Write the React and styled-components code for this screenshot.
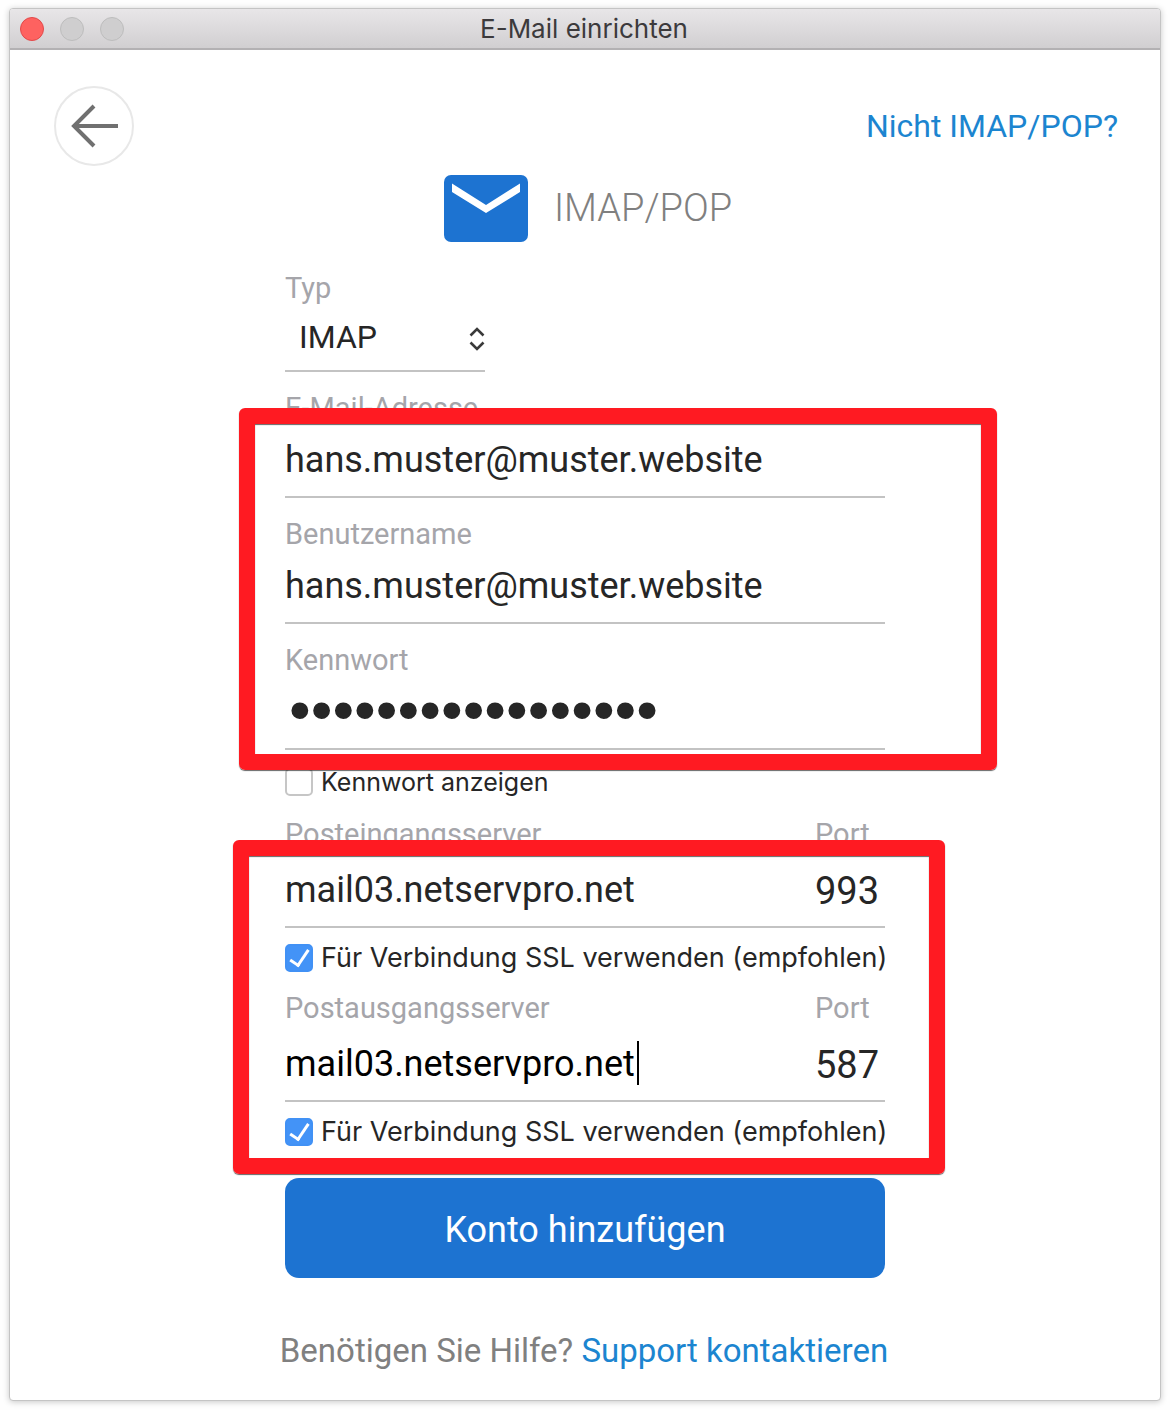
import React, { Component } from 'react';
import styled, { createGlobalStyle, css } from 'styled-components';

const GlobalStyle = createGlobalStyle`
  * {
    box-sizing: border-box;
  }
  body {
    margin: 0;
    background: #fefefe;
    color: #262626;
    font-family: Roboto, "Liberation Sans", sans-serif;
  }
  button, input, select {
    font-family: inherit;
    color: inherit;
  }
`;

const Window = styled.div`
  margin: 8px 9px 9px;
  background: #fff;
  border: 1px solid #c4c4c4;
  border-radius: 4px;
  box-shadow: 0 1px 6px rgba(0, 0, 0, 0.22);
`;

const TitleBar = styled.header`
  display: grid;
  grid-template-columns: 1fr auto 1fr;
  align-items: center;
  height: 41px;
  padding: 0 12px 0 10px;
  border-bottom: 2px solid #b3b1b3;
  border-radius: 3px 3px 0 0;
  background: linear-gradient(#e8e6e8, #d1cfd1);
`;

const Lights = styled.div`
  display: flex;
  gap: 16px;
`;

const Light = styled.button`
  width: 24px;
  height: 24px;
  padding: 0;
  border: 1px solid ${props => props.$close ? '#e2494a' : '#bdbdbd'};
  border-radius: 50%;
  background: ${props => props.$close ? '#fe6260' : '#cfcecf'};
`;

const Title = styled.h1`
  margin: 0;
  font-family: Inter, sans-serif;
  font-size: 26px;
  font-weight: 400;
  line-height: 36px;
  color: #3c3a3c;
`;

const TopNav = styled.nav`
  display: flex;
  align-items: center;
  justify-content: space-between;
  padding: 36px 42px 0 44px;
`;

const BackButton = styled.button`
  display: flex;
  align-items: center;
  justify-content: center;
  width: 80px;
  height: 80px;
  padding: 0;
  border: 2px solid #e8e8e8;
  border-radius: 50%;
  background: #fff;
`;

const Link = styled.a`
  font-size: ${props => props.$inline ? '33px' : '32px'};
  line-height: 40px;
  color: #1c85d0;
  text-decoration: none;
`;

const Form = styled.form`
  display: flex;
  flex-direction: column;
  max-width: 600px;
  margin: 0 auto;
`;

const Heading = styled.h2`
  display: flex;
  align-items: center;
  justify-content: center;
  gap: 26px;
  height: 68px;
  margin: 8px 0 10px;
  padding-left: 6px;
  font-size: 38px;
  font-weight: 300;
  color: #808080;
`;

const Group = styled.fieldset`
  position: relative;
  min-width: 0;
  margin: 0;
  padding: 0;
  border: 0;
`;

// red frame laid over a group of fields
const Marker = styled.span`
  position: absolute;
  inset: ${props => props.$inset};
  border: 16px solid #ff1a22;
  border-radius: 6px;
  box-shadow: 0 1px 1px rgba(0, 0, 0, 0.6), inset 0 1px 1px rgba(0, 0, 0, 0.6);
  pointer-events: none;
`;

const Row = styled.div`
  display: grid;
  grid-template-columns: 1fr 70px;
  border-bottom: 2px solid #c3c3c3;
`;

const FieldBox = styled.div`
  display: flex;
  flex-direction: column;
  padding-top: 18px;
`;

const Label = styled.label`
  font-size: 29px;
  line-height: 36px;
  color: #a5a5aa;
`;

const control = css`
  min-width: 0;
  width: 100%;
  margin: 0;
  padding: 0 0 2px;
  border: 0;
  border-radius: 0;
  outline: 0;
  background: transparent;
  font-size: 36px;
`;

const Input = styled.input`
  ${control}
  height: 72px;
  border-bottom: 2px solid #c3c3c3;
  ${props => props.type === 'password' && css`
    padding: 0 0 8px 4px;
    font-family: "Liberation Sans", sans-serif;
    font-size: 62px;
  `}
`;

const ServerInput = styled.input`
  ${control}
  height: 74px;
  padding: 2px 0 0;
  ${props => props.$active && css`
    width: auto;
    field-sizing: content;
    color: #000;
  `}
  ${props => props.$port && css`
    padding-top: 4px;
    font-size: 38px;
  `}
`;

const ActiveLine = styled.div`
  display: flex;
  align-items: center;
`;

const Caret = styled.span`
  width: 2px;
  height: 44px;
  margin-left: 2px;
  background: #000;
`;

const SelectBox = styled.div`
  position: relative;
  width: 200px;
  svg {
    position: absolute;
    right: 0;
    top: 21px;
    pointer-events: none;
  }
`;

const Select = styled.select`
  ${control}
  appearance: none;
  height: 66px;
  padding-left: 14px;
  border-bottom: 2px solid #c3c3c3;
  font-size: 32px;
`;

const CheckLabel = styled.label`
  display: flex;
  align-items: center;
  gap: 8px;
  height: 28px;
  margin: ${props => props.$small ? '18px 0 2px' : '16px 0 0'};
  font-family: Inter, sans-serif;
  font-size: ${props => props.$small ? '25px' : '27px'};
  line-height: 28px;
  white-space: nowrap;
`;

const Checkbox = styled.input`
  appearance: none;
  display: grid;
  place-items: center;
  flex: none;
  width: 28px;
  height: 28px;
  margin: 0;
  border: 2px solid #c6c6c6;
  border-radius: 5px;
  background: #fff;
  &:checked {
    border-color: #4191f5;
    background: #4393f7;
  }
  &:checked::after {
    content: '';
    width: 8px;
    height: 17px;
    margin-bottom: 4px;
    border: solid #fff;
    border-width: 0 3px 3px 0;
    transform: rotate(34deg);
  }
`;

const SubmitButton = styled.button`
  height: 100px;
  margin-top: 32px;
  padding: 4px 0 0;
  border: 0;
  border-radius: 14px;
  background: #1d73d1;
  color: #fff;
  font-size: 36px;
`;

const Footer = styled.footer`
  padding: 53px 2px 29px 0;
  text-align: center;
  font-size: 33px;
  line-height: 40px;
  color: #808080;
`;

const ArrowIcon = () => (
  <svg width="48" height="44" viewBox="0 0 48 44" fill="none" stroke="#707070" strokeWidth="4">
    <path d="M48 22H4M24 2L4 22l20 20" />
  </svg>
);

const MailIcon = () => (
  <svg width="84" height="67" viewBox="0 0 84 67">
    <rect width="84" height="67" rx="7" fill="#1d73d1" />
    <path d="M8 8.5L42 30 76 8.5V17L42 38 8 17z" fill="#fff" />
  </svg>
);

const SelectArrows = () => (
  <svg width="16" height="24" viewBox="0 0 16 24" fill="none" stroke="#3a3a3a" strokeWidth="2.6">
    <path d="M1.5 8.5L8 2l6.5 6.5M1.5 15.5L8 22l6.5-6.5" />
  </svg>
);

const Field = ({ id, label, ...rest }) => (
  <FieldBox>
    <Label htmlFor={id}>{label}</Label>
    <Input id={id} {...rest} />
  </FieldBox>
);

const ServerFields = ({ id, label, host, port, active, onChange }) => (
  <>
    <Row>
      <FieldBox>
        <Label htmlFor={id}>{label}</Label>
        <ActiveLine>
          <ServerInput id={id} name={id} value={host} onChange={onChange} $active={active} />
          {active && <Caret />}
        </ActiveLine>
      </FieldBox>
      <FieldBox>
        <Label htmlFor={id + 'Port'}>Port</Label>
        <ServerInput id={id + 'Port'} name={id + 'Port'} value={port} onChange={onChange} $port />
      </FieldBox>
    </Row>
    <CheckLabel>
      <Checkbox type="checkbox" defaultChecked />
      Für Verbindung SSL verwenden (empfohlen)
    </CheckLabel>
  </>
);

class App extends Component {
  state = {
    type: 'IMAP',
    email: 'hans.muster@muster.website',
    user: 'hans.muster@muster.website',
    password: 'muster-kennwort17',
    showPassword: false,
    incoming: 'mail03.netservpro.net',
    incomingPort: '993',
    outgoing: 'mail03.netservpro.net',
    outgoingPort: '587'
  }

  setField = (e) => {
    this.setState({ [e.target.name]: e.target.value })
  }

  togglePassword = () => {
    this.setState({ showPassword: !this.state.showPassword })
  }

  render() {
    const { type, email, user, password, showPassword } = this.state
    const { incoming, incomingPort, outgoing, outgoingPort } = this.state

    return (
      <>
        <GlobalStyle />
        <Window>
          <TitleBar>
            <Lights>
              <Light $close aria-label="Schließen" />
              <Light aria-label="Minimieren" />
              <Light aria-label="Zoomen" />
            </Lights>
            <Title>E-Mail einrichten</Title>
          </TitleBar>
          <TopNav>
            <BackButton aria-label="Zurück"><ArrowIcon /></BackButton>
            <Link href="#provider">Nicht IMAP/POP?</Link>
          </TopNav>
          <Form onSubmit={(e) => e.preventDefault()}>
            <Heading><MailIcon />IMAP/POP</Heading>
            <FieldBox>
              <Label htmlFor="type">Typ</Label>
              <SelectBox>
                <Select id="type" name="type" value={type} onChange={this.setField}>
                  <option>IMAP</option>
                  <option>POP</option>
                </Select>
                <SelectArrows />
              </SelectBox>
            </FieldBox>
            <Group>
              <Field id="email" name="email" label="E-Mail-Adresse" value={email} onChange={this.setField} />
              <Field id="user" name="user" label="Benutzername" value={user} onChange={this.setField} />
              <Field id="password" name="password" label="Kennwort" type={showPassword ? 'text' : 'password'} value={password} onChange={this.setField} />
              <Marker $inset="36px -112px -20px -46px" />
            </Group>
            <CheckLabel $small>
              <Checkbox type="checkbox" checked={showPassword} onChange={this.togglePassword} />
              Kennwort anzeigen
            </CheckLabel>
            <Group>
              <ServerFields id="incoming" label="Posteingangsserver" host={incoming} port={incomingPort} onChange={this.setField} />
              <ServerFields id="outgoing" label="Postausgangsserver" host={outgoing} port={outgoingPort} onChange={this.setField} active />
              <Marker $inset="42px -60px -28px -52px" />
            </Group>
            <SubmitButton type="submit">Konto hinzufügen</SubmitButton>
          </Form>
          <Footer>
            Benötigen Sie Hilfe? <Link href="#support" $inline>Support kontaktieren</Link>
          </Footer>
        </Window>
      </>
    );
  }
}

export default App;
